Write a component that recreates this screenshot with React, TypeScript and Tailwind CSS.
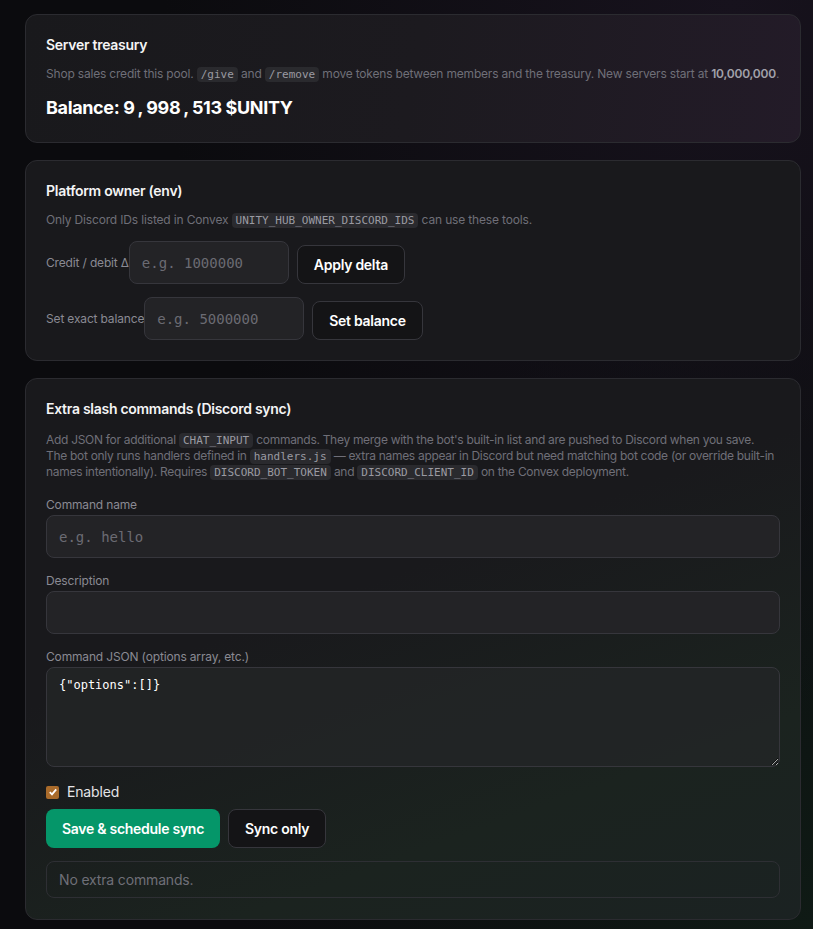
import React from "react";

const Code = ({ children }: { children: React.ReactNode }) => (
  <code className="rounded-[4px] bg-[#2a2a2e] px-[4px] py-[1px] font-['DejaVu_Sans_Mono',monospace] text-[11px] leading-3 tracking-normal text-[#9a9aa2]">
    {children}
  </code>
);

const inputCls =
  "h-[43px] rounded-lg border border-[#36363c] bg-[#232326] px-3 font-['DejaVu_Sans_Mono',monospace] text-[14px] tracking-normal text-[#e4e4e7] placeholder:text-[#6b6b73] outline-none";

const ghostBtn =
  "h-[39px] rounded-lg border border-[#36363c] bg-[#141416] px-4 text-[14px] font-semibold tracking-[-0.02em] text-white";

const Comma = () => <span className="mx-[3px]">,</span>;

export default function App() {
  return (
    <div className="min-h-[929px] w-full bg-[radial-gradient(ellipse_at_90%_0%,#17121d_0%,transparent_55%),radial-gradient(ellipse_at_100%_100%,#0f1a15_0%,transparent_50%),linear-gradient(#0b0b0e,#0b0b0e)] pt-[14px] pb-[9px] font-['Inter',sans-serif] tracking-[-0.01em]">
      <div className="ml-[25px] flex w-[776px] flex-col gap-[17px]">
        {/* Card 1 */}
        <section className="rounded-xl border border-[#2b2b30] bg-[linear-gradient(100deg,#19191c_0%,#1c1a1f_50%,#231b28_100%)] px-5 pt-5 pb-5">
          <h2 className="text-[14px] leading-5 font-semibold tracking-[-0.02em] text-[#f4f4f5]">Server treasury</h2>
          <p className="mt-[11px] whitespace-nowrap text-[12px] leading-4 tracking-[-0.016em] text-[#6f6f78]">
            Shop sales credit this pool. <Code>/give</Code> and <Code>/remove</Code> move tokens between members and the treasury. New servers start at{" "}
            <span className="font-semibold text-[#a1a1aa]">10,000,000</span>.
          </p>
          <div className="mt-[12px] text-[18px] leading-7 font-bold tracking-[-0.02em] text-white">
            Balance: 9<Comma />998<Comma />513 $UNITY
          </div>
        </section>

        {/* Card 2 */}
        <section className="rounded-xl border border-[#2b2b30] bg-[#19191c] px-5 pt-5 pb-5">
          <h2 className="text-[14px] leading-5 font-semibold tracking-[-0.02em] text-[#f4f4f5]">Platform owner (env)</h2>
          <p className="mt-[11px] text-[12px] leading-4 text-[#6f6f78]">
            Only Discord IDs listed in Convex <Code>UNITY_HUB_OWNER_DISCORD_IDS</Code> can use these tools.
          </p>
          <div className="mt-[13px] flex flex-col gap-[13px]">
            <div className="flex items-end gap-2">
              <label className="flex items-center text-[12px] text-[#8a8a93]">
                Credit / debit Δ
                <input className={inputCls + " w-[160px]"} placeholder="e.g. 1000000" />
              </label>
              <button className={ghostBtn}>Apply delta</button>
            </div>
            <div className="flex items-end gap-2">
              <label className="flex items-center text-[12px] text-[#8a8a93]">
                Set exact balance
                <input className={inputCls + " w-[160px]"} placeholder="e.g. 5000000" />
              </label>
              <button className={ghostBtn}>Set balance</button>
            </div>
          </div>
        </section>

        {/* Card 3 */}
        <section className="rounded-xl border border-[#2b2b30] bg-[linear-gradient(160deg,#19191c_0%,#19191c_40%,#1b231f_75%,#1b2222_100%)] px-5 pt-5 pb-[21px]">
          <h2 className="text-[14px] leading-5 font-semibold tracking-[-0.02em] text-[#f4f4f5]">Extra slash commands (Discord sync)</h2>
          <p className="mt-[13px] text-[12px] leading-4 tracking-[-0.025em] text-[#6f6f78]">
            <span className="whitespace-nowrap">
              Add JSON for additional <Code>CHAT_INPUT</Code> commands. They merge with the bot's built-in list and are pushed to Discord when you save.
            </span>
            <br />
            <span className="whitespace-nowrap">
              The bot only runs handlers defined in <Code>handlers.js</Code> — extra names appear in Discord but need matching bot code (or override built-in
            </span>
            <br />
            names intentionally). Requires <Code>DISCORD_BOT_TOKEN</Code> and <Code>DISCORD_CLIENT_ID</Code> on the Convex deployment.
          </p>

          <div className="mt-[17px] flex flex-col">
            <label className="mb-[2px] text-[12px] leading-4 text-[#8a8a93]">Command name</label>
            <input className={inputCls + " w-full"} placeholder="e.g. hello" />
          </div>
          <div className="mt-[15px] flex flex-col">
            <label className="mb-[2px] text-[12px] leading-4 text-[#8a8a93]">Description</label>
            <input className={inputCls + " w-full bg-[#222325]"} />
          </div>
          <div className="mt-[15px] flex flex-col">
            <label className="mb-[2px] text-[12px] leading-4 text-[#8a8a93]">Command JSON (options array, etc.)</label>
            <textarea
              className="h-[100px] w-full rounded-lg border border-[#36363c] bg-[#232527]/80 px-3 pt-[9px] font-['DejaVu_Sans_Mono',monospace] text-[12px] leading-4 tracking-normal text-white outline-none"
              defaultValue={'{"options":[]}'}
            />
          </div>

          <label className="mt-[15px] flex items-center gap-2 text-[14px] leading-5 text-[#e4e4e7]">
            <span className="flex h-[13px] w-[13px] items-center justify-center rounded-[2px] bg-[#a96b2b]">
              <svg width="10" height="10" viewBox="0 0 10 10">
                <path d="M1.8 5.2 L4 7.4 L8.2 2.4" fill="none" stroke="white" strokeWidth="1.8" />
              </svg>
            </span>
            Enabled
          </label>

          <div className="mt-[7px] flex gap-[8px]">
            <button className="h-[39px] rounded-lg bg-[#059669] px-4 text-[14px] font-semibold tracking-[-0.02em] text-white">
              Save &amp; schedule sync
            </button>
            <button className={ghostBtn + " bg-[#18191b]"}>Sync only</button>
          </div>

          <div className="mt-[13px] flex h-[37px] items-center rounded-lg border border-[#2e2f34] px-3 text-[14px] text-[#6f6f78]">
            No extra commands.
          </div>
        </section>
      </div>
    </div>
  );
}
